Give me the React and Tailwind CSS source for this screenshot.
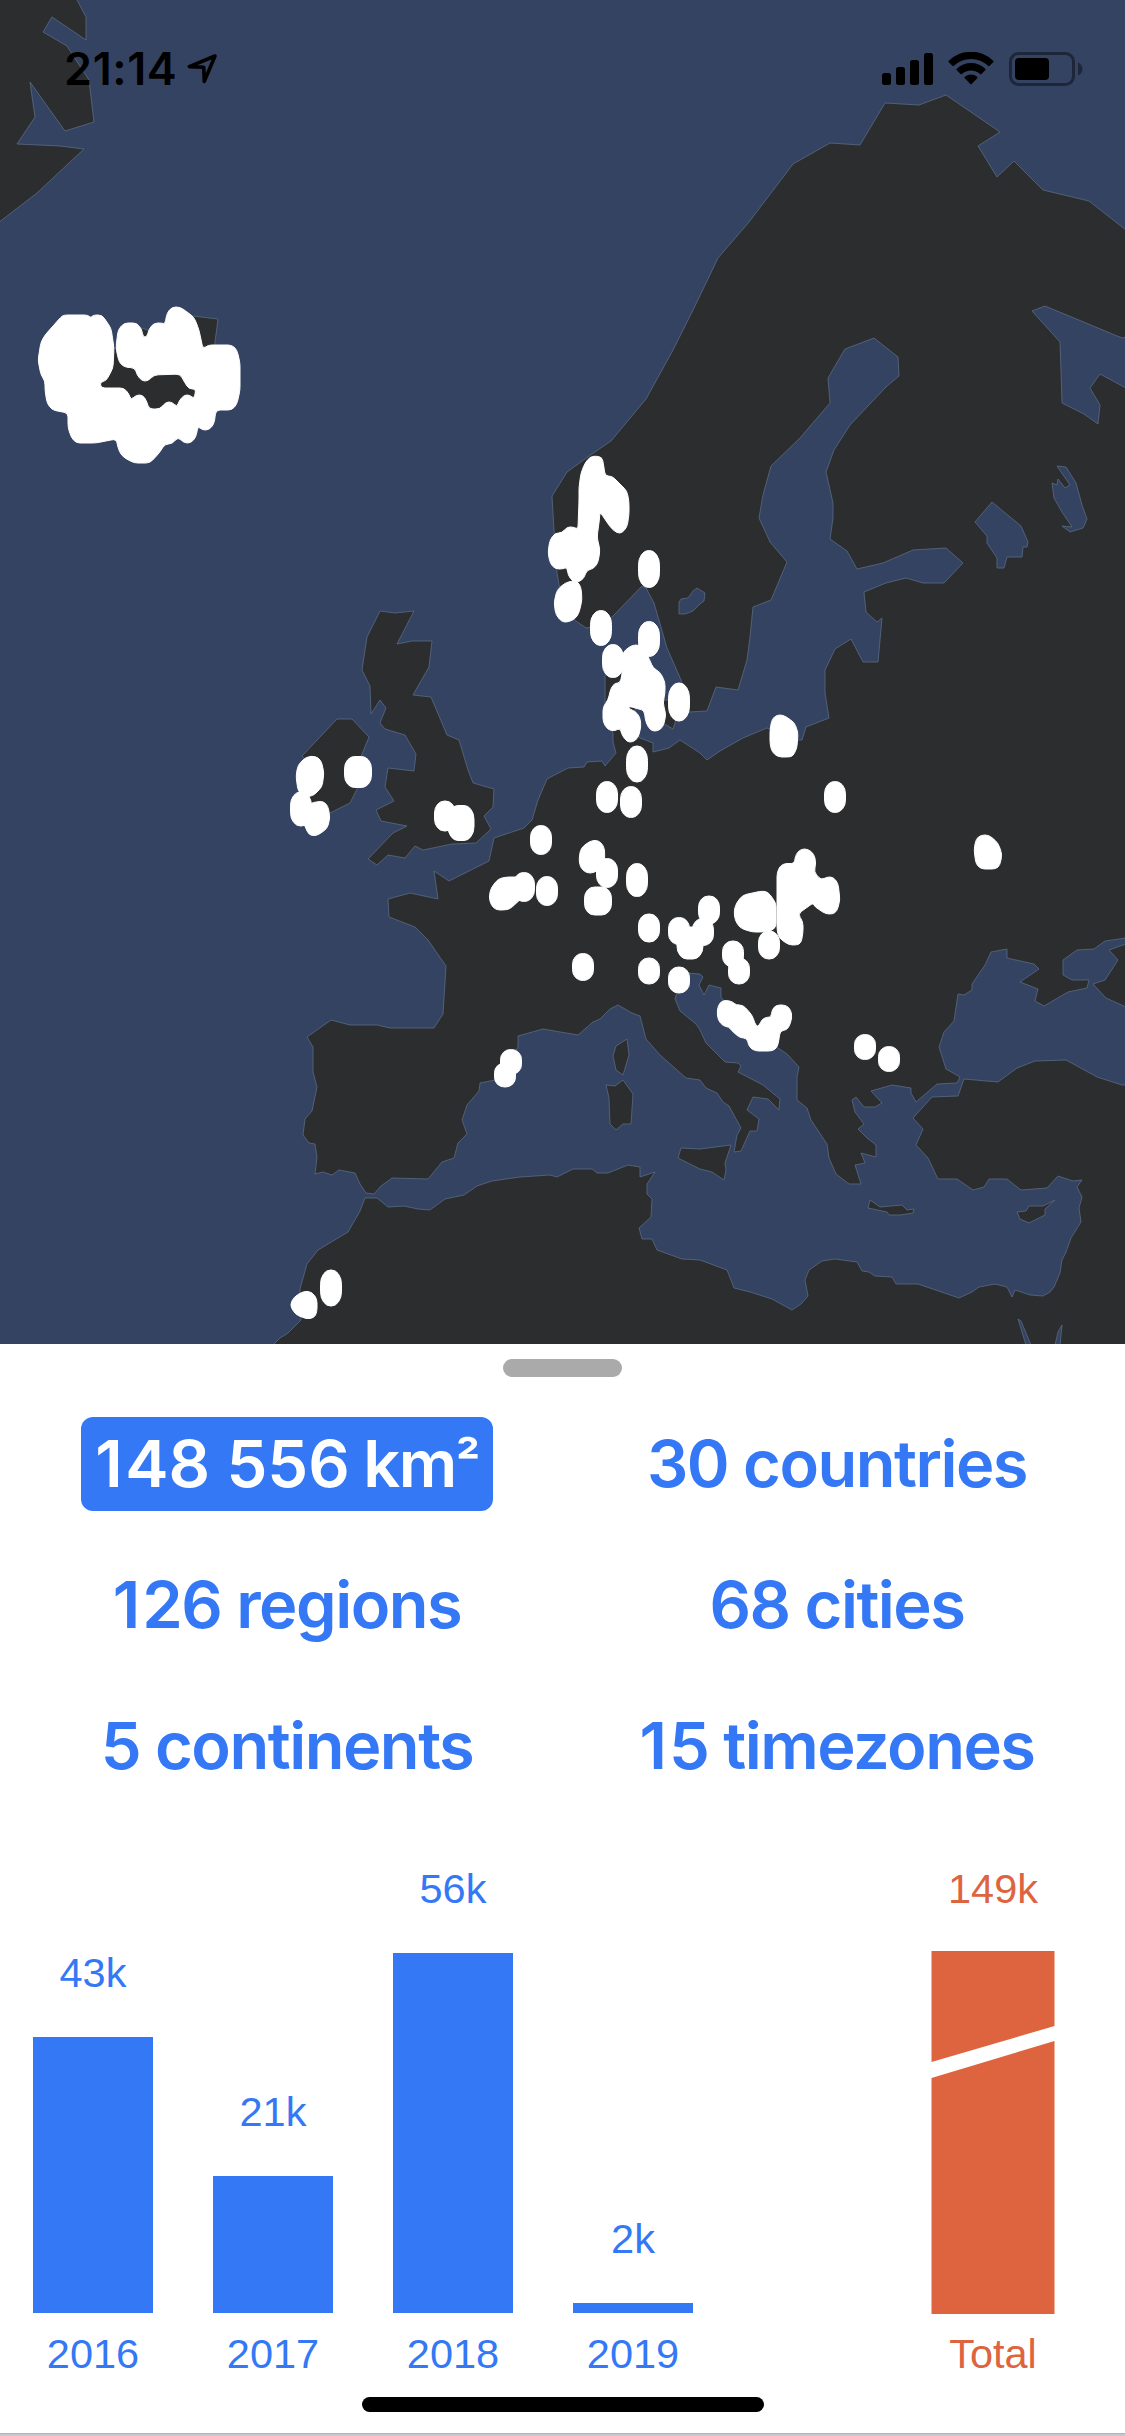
const LAND = [
  // Greenland
  "-2,-2 76,-2 86,17 86,40 52,17 43,32 67,46 76,60 89,80 94,122 65,131 30,82 35,117 17,144 60,146 84,149 37,193 -2,223",
  // Iceland
  "193,316 218,319 214,350 214,400 160,425 90,400 90,380 114,349 122,345 130,345 142,328 147,330 165,335",
  // Continental Europe
  "1126,230 1089,201 1043,190 1014,161 997,177 978,146 1000,132 946,95 919,105 885,103 860,145 830,143 793,164 749,222 718,258 693,310 673,350 646,399 611,441 592,454 567,472 552,496 554,530 557,573 560,590 573,619 586,628 593,627 612,617 642,586 646,588 654,603 667,648 681,680 689,712 707,711 716,687 738,690 747,660 750,637 753,607 771,600 787,562 770,542 759,518 763,495 771,466 800,438 830,403 828,378 845,349 874,338 898,357 899,376 887,386 868,406 850,425 834,450 826,472 833,503 833,518 830,539 847,551 857,569 883,563 913,550 946,548 963,563 944,583 923,583 906,578 886,583 864,592 866,612 877,622 882,618 878,662 863,662 851,639 835,649 825,670 825,693 829,718 806,727 802,740 797,740 767,728 743,738 720,751 707,760 700,753 680,740 669,748 653,752 653,743 640,738 632,728 640,680 610,668 605,676 605,705 613,733 613,742 616,753 605,766 602,761 587,762 584,767 568,768 547,779 538,800 532,820 524,828 494,838 489,861 449,881 434,871 438,899 410,893 388,899 389,917 415,927 428,940 446,966 443,1014 434,1028 390,1028 377,1025 350,1025 331,1020 307,1037 313,1047 313,1072 317,1087 312,1111 305,1119 303,1135 309,1143 315,1144 317,1157 315,1174 323,1172 332,1175 339,1170 355,1173 360,1184 366,1193 374,1194 381,1186 392,1178 428,1179 442,1162 454,1158 458,1143 467,1134 462,1120 467,1105 479,1091 480,1083 495,1080 518,1047 518,1036 543,1029 578,1035 593,1022 600,1019 610,1009 618,1005 632,1013 640,1016 646,1039 660,1055 686,1078 700,1080 706,1088 717,1093 723,1102 729,1106 741,1128 737,1135 734,1152 741,1151 750,1131 757,1131 759,1119 747,1110 753,1097 768,1099 779,1110 780,1099 763,1085 738,1072 741,1066 738,1063 725,1062 706,1043 700,1030 696,1024 680,1011 675,999 677,992 688,973 700,974 703,977 699,985 704,995 709,985 721,988 721,997 747,1030 778,1048 787,1054 799,1067 797,1077 797,1100 807,1108 811,1120 827,1144 829,1158 836,1174 849,1184 861,1184 855,1165 865,1163 861,1153 876,1157 876,1145 867,1138 858,1129 864,1124 855,1112 852,1100 856,1097 864,1107 875,1107 882,1103 871,1091 892,1085 911,1088 911,1093 916,1102 937,1084 957,1083 960,1077 946,1069 939,1047 944,1032 954,1021 958,994 964,995 972,990 972,984 985,965 991,952 1007,949 1007,958 1034,964 1039,969 1020,982 1038,989 1035,1001 1044,1006 1068,992 1087,988 1089,980 1072,980 1063,975 1063,960 1077,950 1094,949 1105,941 1126,938 1126,388 1100,374 1090,388 1100,405 1098,424 1084,414 1062,403 1061,370 1060,342 1032,311 1045,306 1122,338 1126,337",
  // Caucasus
  "1126,944 1109,950 1118,960 1105,980 1093,984 1106,998 1126,1007",
  // Anatolia, Levant and North Africa
  "1126,1085 1122,1085 1097,1077 1066,1060 1035,1061 1017,1068 998,1082 964,1079 958,1096 932,1097 913,1118 923,1129 916,1145 928,1158 938,1179 957,1179 973,1190 984,1187 989,1179 1007,1179 1021,1190 1047,1188 1058,1176 1073,1181 1082,1180 1077,1187 1082,1197 1079,1208 1081,1222 1071,1238 1066,1252 1062,1260 1060,1273 1054,1287 1050,1292 1043,1296 1030,1295 1015,1290 1012,1297 1007,1287 995,1284 979,1287 972,1292 959,1298 918,1284 896,1284 892,1277 875,1276 869,1272 862,1271 857,1262 835,1259 822,1261 809,1270 805,1280 808,1296 801,1304 792,1310 772,1299 750,1292 734,1288 727,1270 700,1260 682,1259 657,1250 652,1239 642,1239 639,1228 651,1217 652,1199 647,1194 647,1184 655,1172 640,1177 640,1167 628,1165 608,1173 597,1173 592,1169 573,1169 557,1177 550,1175 520,1177 492,1181 477,1186 464,1195 445,1199 430,1210 418,1209 404,1206 388,1207 377,1198 365,1198 360,1211 348,1232 318,1250 307,1264 300,1289 301,1320 288,1333 280,1338 272,1346 1126,1346",
  // Corsica, Sardinia, Sicily
  "627,1039 629,1055 623,1075 616,1070 613,1056 616,1046",
  "606,1085 615,1086 623,1080 633,1094 631,1124 623,1124 616,1130 610,1124 609,1098",
  "681,1148 700,1149 731,1145 725,1163 726,1170 724,1180 712,1172 700,1169 678,1158",
  // Crete, Cyprus
  "870,1200 880,1207 902,1205 907,1210 914,1209 913,1213 900,1215 889,1215 887,1212 868,1208",
  "1017,1212 1026,1211 1029,1206 1043,1206 1055,1200 1045,1209 1045,1215 1029,1223 1020,1219",
  // Great Britain, Ireland
  "380,611 395,613 414,611 397,644 412,641 432,641 429,667 413,695 431,697 447,735 459,740 468,770 473,783 494,789 493,807 484,816 491,829 476,843 452,844 423,850 415,846 405,858 388,855 377,865 368,859 393,833 407,826 381,821 376,810 394,801 385,787 388,768 414,771 416,754 405,735 385,729 380,723 386,708 380,700 371,714 370,686 362,670 367,637",
  "337,719 352,719 369,737 358,764 358,787 350,803 330,813 310,817 302,790 310,765 302,756",
  // Zealand
  "663,723 673,729 676,720 668,700 650,700",
];

const LAKES = [
  "697,588 705,593 704,601 700,604 693,611 685,614 679,614 679,602 681,599 688,598 693,591",
  "992,502 1021,526 1028,542 1027,547 1023,547 1022,557 1007,557 1004,568 997,568 997,558 987,543 987,536 975,522",
  "1057,466 1066,467 1076,483 1082,505 1087,519 1083,528 1070,532 1062,526 1072,527 1062,512 1054,498 1052,483 1057,485 1058,479 1065,488 1070,485",
  "1018,1319 1021,1321 1031,1345 1026,1345",
  "1062,1325 1060,1345 1055,1345 1058,1332",
];

const REGIONS = [
  "64,315 88,315 91,318 93,315 102,315 111,328 114,348 113,368 106,381 100,382 101,388 124,388 129,394 131,400 136,395 143,395 147,402 149,409 160,409 166,402 172,402 177,407 179,401 184,395 190,395 194,399 196,389 189,389 185,383 180,374 154,375 148,381 142,381 137,375 135,368 124,367 119,362 116,348 118,330 124,323 137,323 142,330 143,337 147,337 149,329 154,323 162,323 165,324 167,313 172,307 180,307 194,317 199,330 203,349 208,345 232,345 237,350 240,363 240,390 237,404 232,410 216,410 214,424 209,430 202,430 198,426 196,437 191,443 184,443 178,437 172,444 165,444 160,452 150,463 134,463 123,457 119,451 116,439 96,443 76,443 71,437 68,427 68,413 52,410 47,403 45,390 45,381 41,375 38,360 41,342 45,335 61,317",
  "585,463 590,457 595,456 602,457 604,467 605,476 612,476 627,491 629,502 629,515 627,527 622,533 617,533 611,528 600,512 599,523 597,537 600,550 598,563 593,569 587,570 584,578 579,582 573,582 568,575 567,567 563,569 555,569 550,563 548,552 550,540 555,533 562,533 567,527 573,527 578,529 579,500 579,487 581,473",
  "565,583 572,581 577,581 581,587 582,600 579,613 575,619 568,622 562,622 556,615 554,603 557,590",
  "623,652 632,645 640,645 648,656 653,668 660,672 665,682 665,693 663,703 666,715 663,727 658,731 651,731 646,723 644,710 638,709 629,706 629,709 635,711 640,717 641,727 638,738 633,742 627,742 622,735 620,728 615,731 608,730 603,722 603,707 608,700 611,688 615,683 620,683 622,675",
  "737,902 743,895 762,891 768,892 776,903 776,927 771,931 763,932 752,932 740,928 735,920 734,910",
  "777,873 780,866 786,863 794,864 796,854 801,849 808,849 814,854 816,863 814,872 821,880 827,877 833,877 838,883 840,900 837,911 833,914 826,914 815,907 813,903 798,914 803,922 803,933 801,943 797,945 789,945 779,938 777,930",
  "717,1010 720,1002 726,1000 733,1002 736,1005 743,1005 752,1015 756,1026 759,1026 762,1019 768,1017 771,1017 772,1010 776,1005 786,1005 791,1010 792,1018 789,1027 786,1030 780,1031 779,1040 777,1048 772,1051 755,1051 749,1047 747,1038 740,1038 731,1030 729,1027 723,1026 718,1020",
  "489,897 491,888 498,879 506,877 524,877 524,896 510,909 504,910 496,910 491,905",
  "770,730 772,719 777,715 783,715 794,722 798,732 797,748 793,756 789,757 778,757 772,752 770,744",
  "974,850 976,839 981,835 989,835 998,843 1002,854 1000,865 996,869 981,869 976,864",
  "579,858 581,848 590,841 598,840 604,846 605,857 602,867 594,873 586,873 580,867",
  "296,776 298,765 306,757 315,756 321,760 324,773 322,787 313,796 304,797 298,791",
  "303,822 304,812 310,803 323,801 328,806 330,818 327,829 316,836 309,835",
  "290,1305 294,1297 304,1291 312,1292 317,1299 317,1312 314,1318 306,1319 295,1314",
];

// Single visited spots: centre x, centre y, width, height
const SPOTS = [
  [649, 569, 21, 37], [601, 628, 21, 35], [649, 639, 21, 35], [613, 661, 21, 33],
  [679, 702, 21, 38], [358, 772, 27, 31], [301, 809, 21, 34], [445, 816, 21, 30],
  [461, 823, 26, 35], [637, 764, 21, 36], [607, 797, 21, 31], [631, 802, 21, 31],
  [541, 840, 21, 29], [607, 873, 21, 29], [637, 880, 21, 33], [524, 887, 21, 29],
  [547, 891, 21, 29], [598, 901, 27, 28], [649, 928, 21, 28], [583, 967, 21, 27],
  [649, 971, 21, 26], [679, 980, 21, 26], [679, 931, 21, 27], [709, 910, 21, 28],
  [703, 932, 21, 27], [690, 943, 26, 32], [511, 1062, 21, 25], [505, 1075, 21, 24],
  [331, 1288, 21, 36], [733, 954, 21, 26], [739, 971, 21, 26], [769, 945, 21, 28],
  [865, 1047, 21, 25], [889, 1059, 21, 25], [835, 797, 21, 31],
];

// Turns a point list into a closed path whose corners are slightly rounded
function roundedPath(points, radius) {
  const pts = points.split(" ").map((p) => p.split(",").map(Number));
  const toward = (a, b) => {
    const len = Math.hypot(b[0] - a[0], b[1] - a[1]) || 1;
    const t = Math.min(radius / len, 0.5);
    return [a[0] + (b[0] - a[0]) * t, a[1] + (b[1] - a[1]) * t].map((n) => n.toFixed(1)).join(" ");
  };
  return (
    pts
      .map((p, i) => {
        const prev = pts[(i + pts.length - 1) % pts.length];
        const next = pts[(i + 1) % pts.length];
        return `${i ? "L" : "M"}${toward(p, prev)}Q${p[0]} ${p[1]} ${toward(p, next)}`;
      })
      .join("") + "Z"
  );
}

function WorldMap() {
  return (
    <svg className="absolute inset-0" width="1125" height="1344" viewBox="0 0 1125 1344">
      <rect width="1125" height="1344" fill="#354362" />
      <g fill="#2c2d2f" stroke="#596b80" strokeWidth="0.8" strokeLinejoin="round">
        {LAND.map((p) => <polygon key={p} points={p} />)}
      </g>
      <g fill="#354362" stroke="#596b80" strokeWidth="0.8">
        {LAKES.map((p) => <polygon key={p} points={p} />)}
      </g>
      <g fill="#fff" stroke="#fff" strokeWidth="1" strokeLinejoin="round">
        {REGIONS.map((p) => <path key={p} d={roundedPath(p, 4)} />)}
        {SPOTS.map(([x, y, w, h]) => (
          <rect key={`${x}-${y}`} x={x - w / 2} y={y - h / 2} width={w} height={h} rx={w > 22 ? 10 : 10} ry={h * 0.4} />
        ))}
      </g>
    </svg>
  );
}

function StatusBar() {
  return (
    <header className="relative flex h-[138px] items-start justify-between pl-[64px] pr-[42px] text-black">
      <div className="flex items-start">
        <span className="mt-[42px] h-[54px] w-[123px] whitespace-nowrap font-['Inter'] text-[45px] font-semibold leading-[54px] tracking-[0.6px]">21:14</span>
        <svg className="mt-[52px]" width="32" height="34" viewBox="187 52 32 34">
          <path d="M189.300 66.600 215 56 204.300 81.400 203.700 67.200Z" fill="none" stroke="#000" strokeWidth="3.600" strokeLinejoin="round" />
        </svg>
      </div>
      <div className="mt-[52px] flex items-start">
        <svg width="52" height="34" viewBox="881 52 52 34">
          <rect x="882" y="73" width="9" height="12" rx="2.5" />
          <rect x="896" y="67" width="9" height="18" rx="2.5" />
          <rect x="910" y="60" width="9" height="25" rx="2.5" />
          <rect x="924" y="53" width="9" height="32" rx="2.5" />
        </svg>
        <svg className="ml-[15px]" width="46" height="34" viewBox="948 52 46 34">
          <path d="M948.8 62.2a1 1 0 0 1 0-1.5 31.8 31.8 0 0 1 44.4 0 1 1 0 0 1 0 1.5l-3.6 3.6a1 1 0 0 1-1.5 0 24.7 24.7 0 0 0-34.2 0 1 1 0 0 1-1.5 0z" />
          <path d="M956.8 70.3a1 1 0 0 1 0-1.5 20.6 20.6 0 0 1 28.4 0 1 1 0 0 1 0 1.5l-3.7 3.7a1 1 0 0 1-1.4 0 13.3 13.3 0 0 0-18.2 0 1 1 0 0 1-1.4 0z" />
          <path d="M964.8 78.2a1 1 0 0 1 0-1.5 9.7 9.7 0 0 1 12.4 0 1 1 0 0 1 0 1.5l-5.5 5.9a1 1 0 0 1-1.400 0z" />
        </svg>
        <svg className="ml-[15px]" width="74" height="34" viewBox="1009 52 74 34">
          <rect x="1010.5" y="53.5" width="63" height="31" rx="8" fill="none" stroke="#000" strokeOpacity="0.42" strokeWidth="3" />
          <rect x="1015" y="58" width="34" height="22" rx="4" />
          <path d="M1078 62.500c2.800 1.200 4.400 3.500 4.400 6.500s-1.600 5.300-4.400 6.500z" fillOpacity="0.42" />
        </svg>
      </div>
    </header>
  );
}

const YEARS = [
  { year: "2016", value: "43k", height: 276 },
  { year: "2017", value: "21k", height: 137 },
  { year: "2018", value: "56k", height: 360 },
  { year: "2019", value: "2k", height: 10 },
];

function Stat({ active = false, children }) {
  return (
    <div className="flex justify-center">
      <div
        className={`h-[94px] whitespace-nowrap rounded-[12px] text-center font-['Inter'] text-[65px] font-semibold leading-[94px] tracking-[-1.5px] ${
          active ? "w-[412px] bg-[#3478f6] text-white" : "text-[#3478f6]"
        }`}
      >
        {children}
      </div>
    </div>
  );
}

function Stats() {
  return (
    <div className="mt-[40px] ml-[12px] grid w-[1100px] grid-cols-2 gap-y-[47px]">
      <Stat active>
        <span className="tracking-[2.5px]">1</span>
        <span className="tracking-[0px]">48 556</span>
        <span className="tracking-[-3px]"> </span>
        km
        <span className="relative -top-[5px] text-[54px] leading-none">²</span>
      </Stat>
      <Stat>30 countries</Stat>
      <Stat>
        <span className="tracking-[2px]">1</span>26 regions
      </Stat>
      <Stat>68 cities</Stat>
      <Stat>5 continents</Stat>
      <Stat>
        <span className="tracking-[2px]">1</span>5 timezones
      </Stat>
    </div>
  );
}

function Chart() {
  return (
    <div className="flex h-[518px] items-end font-['Liberation_Sans'] text-[41.5px] leading-[48px] text-[#3478f6]">
      <div className="flex items-end gap-[60px] pl-[33px]">
        {YEARS.map(({ year, value, height }) => (
          <div key={year} className="flex w-[120px] flex-col items-center">
            <span className="mb-[40px]">{value}</span>
            <div className="w-full bg-[#3478f6]" style={{ height }} />
            <span className="mt-[17px] mb-px">{year}</span>
          </div>
        ))}
      </div>
      <div className="ml-[238px] flex w-[124px] flex-col items-center text-[#dd643e]">
        <span className="mb-[38px]">149k</span>
        <svg width="124" height="363" viewBox="0 0 124 363" fill="#dd643e">
          <polygon points="0.500,0 123.500,0 123.500,75 0.500,111" />
          <polygon points="0.500,127 123.500,90 123.500,363 0.500,363" />
        </svg>
        <span className="mt-[16px] mb-px">Total</span>
      </div>
    </div>
  );
}

export default function App() {
  return (
    <main className="flex h-[2436px] w-[1125px] flex-col overflow-hidden bg-white">
      <section className="relative h-[1344px] shrink-0 overflow-hidden">
        <WorldMap />
        <StatusBar />
      </section>
      <section className="flex h-[1092px] flex-col">
        <div className="mt-[15px] h-[18px] w-[119px] shrink-0 self-center rounded-[9px] bg-[#aaa]" />
        <Stats />
        <div className="mt-[68px]">
          <Chart />
        </div>
        <div className="mt-[18px] h-[15px] w-[402px] shrink-0 self-center rounded-full bg-black" />
        <div className="mt-auto h-[3px] shrink-0 border-t border-[#b2b2b4] bg-[#c8c8cc]" />
      </section>
    </main>
  );
}
